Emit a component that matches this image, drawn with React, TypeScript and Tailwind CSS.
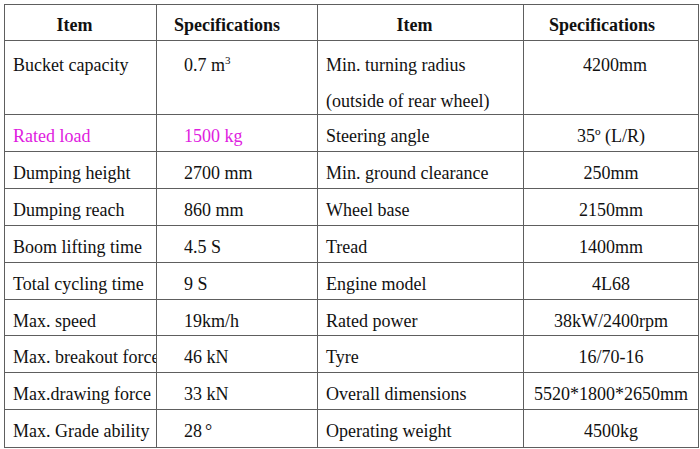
import React from "react";

type Row = { a: React.ReactNode; b: React.ReactNode; c: React.ReactNode; d: React.ReactNode; pink?: boolean };

const rows: Row[] = [
  { a: "Rated load", b: "1500 kg", c: "Steering angle", d: "35º (L/R)", pink: true },
  { a: "Dumping height", b: "2700 mm", c: "Min. ground clearance", d: "250mm" },
  { a: "Dumping reach", b: "860 mm", c: "Wheel base", d: "2150mm" },
  { a: "Boom lifting time", b: "4.5 S", c: "Tread", d: "1400mm" },
  { a: "Total cycling time", b: "9 S", c: "Engine model", d: "4L68" },
  { a: "Max. speed", b: "19km/h", c: "Rated power", d: "38kW/2400rpm" },
  { a: "Max. breakout force", b: "46 kN", c: "Tyre", d: "16/70-16" },
  { a: "Max.drawing force", b: "33 kN", c: "Overall dimensions", d: "5520*1800*2650mm" },
  {
    a: "Max. Grade ability",
    b: (
      <>
        28<span className="ml-[3px]">°</span>
      </>
    ),
    c: "Operating weight",
    d: "4500kg",
  },
];

export default function App() {
  const cell = "bg-white overflow-hidden whitespace-nowrap leading-[36px] pt-[3px]";
  return (
    <div
      className="w-[700px] h-[449px] bg-white pl-[4px] pt-[4px]"
      style={{ fontFamily: '"Liberation Serif", "Times New Roman", serif' }}
    >
      <div
        className="grid w-[695px] bg-[#5e5e5e] gap-[1px] border border-[#5e5e5e] text-[18px] text-[#111111]"
        style={{
          gridTemplateColumns: "151px 160px 205px 174px",
          gridTemplateRows: "35px 73px 36px 36px 36px 36px 36px 35px 36px 36px 37px",
        }}
      >
        <div className="bg-white font-bold text-center pr-[12px] leading-[35px] pt-[3px]">Item</div>
        <div className="bg-white font-bold text-center pr-[20px] leading-[35px] pt-[3px]">Specifications</div>
        <div className="bg-white font-bold text-center pr-[12px] leading-[35px] pt-[3px]">Item</div>
        <div className="bg-white font-bold text-center pr-[18px] leading-[35px] pt-[3px]">Specifications</div>

        <div className="bg-white pl-[8px] leading-[36px] pt-[6px] whitespace-nowrap">Bucket capacity</div>
        <div className="bg-white pl-[27px] leading-[36px] pt-[6px]">
          0.7 m<span className="text-[11px] relative top-[-7px]">3</span>
        </div>
        <div className="bg-white pl-[8px] leading-[36px] pt-[6px] whitespace-nowrap">
          <div>Min. turning radius</div>
          <div>(outside of rear wheel)</div>
        </div>
        <div className="bg-white text-center pl-[8px] leading-[36px] pt-[6px]">4200mm</div>

        {rows.map((r, i) => (
          <React.Fragment key={i}>
            <div className={`${cell} pl-[8px] ${r.pink ? "text-[#e020e0]" : ""}`}>{r.a}</div>
            <div className={`${cell} pl-[27px] ${r.pink ? "text-[#e020e0]" : ""}`}>{r.b}</div>
            <div className={`${cell} pl-[8px]`}>{r.c}</div>
            <div className={`${cell} text-center`}>{r.d}</div>
          </React.Fragment>
        ))}
      </div>
    </div>
  );
}
